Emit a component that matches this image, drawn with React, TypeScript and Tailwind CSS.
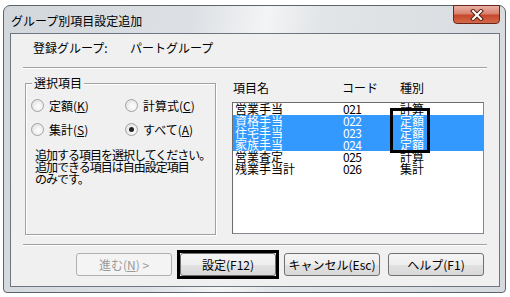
import React from "react";

type Row = { name: string; code: string; kind: string; sel?: boolean };

const rows: Row[] = [
  { name: "営業手当", code: "021", kind: "計算" },
  { name: "資格手当", code: "022", kind: "定額", sel: true },
  { name: "住宅手当", code: "023", kind: "定額", sel: true },
  { name: "家族手当", code: "024", kind: "定額", sel: true },
  { name: "営業査定", code: "025", kind: "計算" },
  { name: "残業手当計", code: "026", kind: "集計" },
];

function Radio({ checked }: { checked?: boolean }) {
  return (
    <span className="w-[13px] h-[13px] rounded-full border border-[#a2a2a2] bg-[radial-gradient(circle_at_60%_60%,#ffffff_0%,#f0f0f0_45%,#d4d4d4_100%)] flex items-center justify-center shrink-0">
      {checked && <span className="w-[5px] h-[5px] rounded-full bg-[#222]" />}
    </span>
  );
}

function Btn({ children, disabled }: { children: React.ReactNode; disabled?: boolean }) {
  return (
    <div
      className={
        disabled
          ? "w-[96px] h-[23px] rounded-[3px] border border-[#adb2b5] bg-[#f4f4f4] text-[#9a9a9a] flex items-center justify-center"
          : "w-[96px] h-[23px] rounded-[3px] border border-[#707070] bg-[linear-gradient(#f4f4f4_0%,#eeeeee_50%,#e2e2e2_51%,#d8d8d8_100%)] flex items-center justify-center"
      }
    >
      {children}
    </div>
  );
}

function CloseButton() {
  return (
    <div className="-mt-[1px] w-[47px] h-[19px] rounded-b-[4px] border border-[#6b2418] bg-[linear-gradient(#eab1a5_0%,#d9826f_45%,#c7472c_55%,#d36a4a_100%)] flex items-center justify-center">
      <svg width="14" height="12" viewBox="0 0 14 12">
        <path d="M3 2 L11 10 M11 2 L3 10" stroke="#5a1d12" strokeWidth="4" strokeLinecap="square" />
        <path d="M3 2 L11 10 M11 2 L3 10" stroke="#ffffff" strokeWidth="2" strokeLinecap="square" />
      </svg>
    </div>
  );
}

export default function App() {
  return (
    <div className="w-[510px] h-[297px] bg-white overflow-hidden font-['Noto_Sans_CJK_JP','Noto_Sans',sans-serif] text-[12px] leading-[12px] text-black">
      <div className="ml-[3px] mt-[5px] w-[503px] h-[288px] rounded-t-[7px] rounded-b-[4px] border border-[#5d646c] bg-[linear-gradient(100deg,#d2d7dc_0%,#dde1e5_35%,#f3f4f5_48%,#e2e5e8_58%,#d5dade_100%)] flex flex-col pl-[6px] pr-[5px] pb-[5px]">
        {/* title bar */}
        <div className="h-[27px] flex items-start justify-between">
          <span className="ml-[1px] mt-[9px]">グループ別項目設定追加</span>
          <CloseButton />
        </div>

        {/* client */}
        <div className="flex-1 border border-[#6c7580] bg-[#f0f0f0] flex flex-col px-[12px]">
          <div className="h-[28px] flex items-center pl-[10px]">
            <span className="w-[97px]">登録グループ:</span>
            <span>パートグループ</span>
          </div>
          <div className="mt-[5px] border-t border-b border-t-[#a0a0a0] border-b-white" />

          <div className="flex items-start">
            {/* group box */}
            <div className="ml-[2px] mt-[14px] w-[191px] h-[152px] border border-[#a0a0a0] shadow-[inset_1px_1px_0_#fff,1px_1px_0_#fff] flex flex-col">
              <span className="self-start -mt-[7px] ml-[6px] px-[2px] bg-[#f0f0f0]">選択項目</span>
              <div className="mt-[10px] grid grid-cols-[94px_1fr] gap-y-[11px] pl-[5px]">
                <label className="flex items-center gap-[5px]">
                  <Radio />
                  <span>
                    定額(<u>K</u>)
                  </span>
                </label>
                <label className="flex items-center gap-[5px]">
                  <Radio />
                  <span>
                    計算式(<u>C</u>)
                  </span>
                </label>
                <label className="flex items-center gap-[5px]">
                  <Radio />
                  <span>
                    集計(<u>S</u>)
                  </span>
                </label>
                <label className="flex items-center gap-[5px]">
                  <Radio checked />
                  <span>
                    すべて(<u>A</u>)
                  </span>
                </label>
              </div>
              <p className="mt-[13px] pl-[9px] leading-[12px] whitespace-nowrap tracking-[-1px]">
                追加する項目を選択してください。
                <br />
                追加できる項目は自由設定項目
                <br />
                のみです。
              </p>
            </div>

            {/* list */}
            <div className="ml-[16px] flex flex-col">
              <div className="mt-[13px] grid grid-cols-[109px_58px_1fr] pl-[1px]">
                <span>項目名</span>
                <span>コード</span>
                <span>種別</span>
              </div>
              <div className="relative mt-[8px] w-[252px] h-[132px] border border-[#828790] border-t-[#6d6d6d] border-l-[#6d6d6d] bg-white">
                {rows.map((r) => (
                  <div
                    key={r.code}
                    className={
                      r.sel
                        ? "h-[12px] grid grid-cols-[108px_57px_1fr] pl-[2px] bg-[#3399ff] text-white"
                        : "h-[12px] grid grid-cols-[108px_57px_1fr] pl-[2px]"
                    }
                  >
                    <span>{r.name}</span>
                    <span className="tracking-[-0.5px]">{r.code}</span>
                    <span>{r.kind}</span>
                  </div>
                ))}
                <div className="absolute left-[157px] top-[5px] w-[40px] h-[45px] border-[3px] border-black" />
              </div>
            </div>
          </div>

          <div className="mt-[9px] border-t border-b border-t-[#a0a0a0] border-b-white" />

          <div className="mt-[7px] flex justify-end gap-[8px] pr-[3px]">
            <Btn disabled>
              <span>
                進む(<u>N</u>) &gt;
              </span>
            </Btn>
            <div className="relative">
              <Btn>設定(F12)</Btn>
              <div className="absolute -inset-[3px] border-[3px] border-black" />
            </div>
            <Btn>キャンセル(Esc)</Btn>
            <Btn>ヘルプ(F1)</Btn>
          </div>
        </div>
      </div>
    </div>
  );
}
